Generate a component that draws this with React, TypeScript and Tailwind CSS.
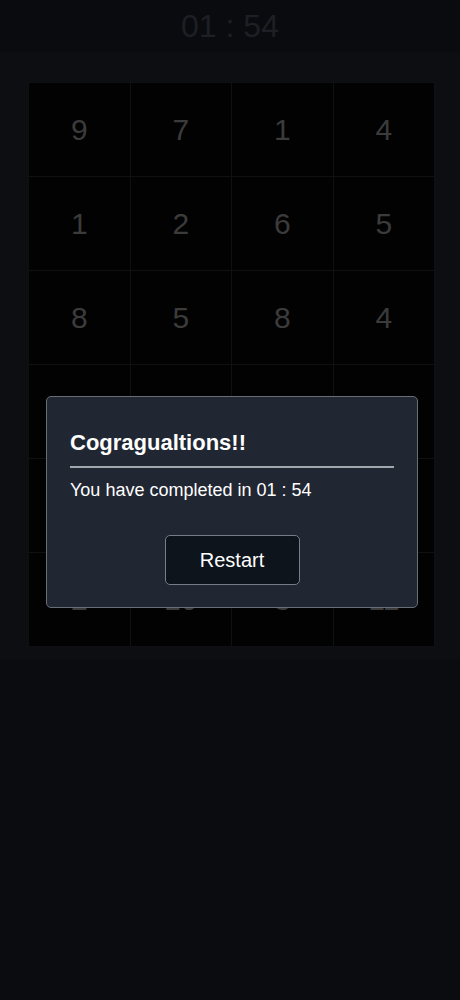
import React from 'react'

const cells = [9, 7, 1, 4, 1, 2, 6, 5, 8, 5, 8, 4, 12, 9, 7, 6, 10, 12, 11, 3, 2, 10, 3, 11]

function Cell({ value }: { value: number }) {
    return (
        <div className="flex items-center justify-center h-[94px] bg-[#020202] border-r border-b border-[#0f1011] text-[30px] text-[#3b3b3c]">
            {value}
        </div>
    )
}

export default function App() {
    return (
        <div
            className="relative min-h-[1000px] bg-[#0b0c0f] antialiased"
            style={{ fontFamily: '"Liberation Sans", Arial, sans-serif' }}
        >
            {/* header with timer */}
            <header className="flex items-center justify-center h-[53px] bg-[#0a0b0e] border-b border-[#0d0e11]">
                <span className="text-[32px] text-[#1c1f23]">01 : 54</span>
            </header>

            <main className="bg-[#0c0e11] pl-[28px] pt-[29px] pb-[12px]">
                <div className="grid grid-cols-4 w-[407px] border-l border-t border-[#0f1011]">
                    {cells.map((n, i) => (
                        <Cell key={i} value={n} />
                    ))}
                </div>
            </main>

            {/* completion dialog */}
            <div className="absolute left-[46px] top-[396px] w-[372px] h-[212px] rounded-[5px] border border-[#696d75] bg-[#212633] px-[23px] pt-[33px] text-white">
                <h2 className="text-[22px] font-bold leading-[26px]">Cogragualtions!!</h2>
                <div className="mt-[10px] h-[2px] bg-[#a3a6ad]" />
                <p className="mt-[11px] text-[18px] leading-[22px]">You have completed in 01 : 54</p>
                <div className="flex justify-center mt-[34px]">
                    <button
                        type="button"
                        className="w-[135px] h-[50px] rounded-[5px] border border-[#777c85] bg-[#0d141c] text-[20px] text-white"
                    >
                        Restart
                    </button>
                </div>
            </div>
        </div>
    )
}
